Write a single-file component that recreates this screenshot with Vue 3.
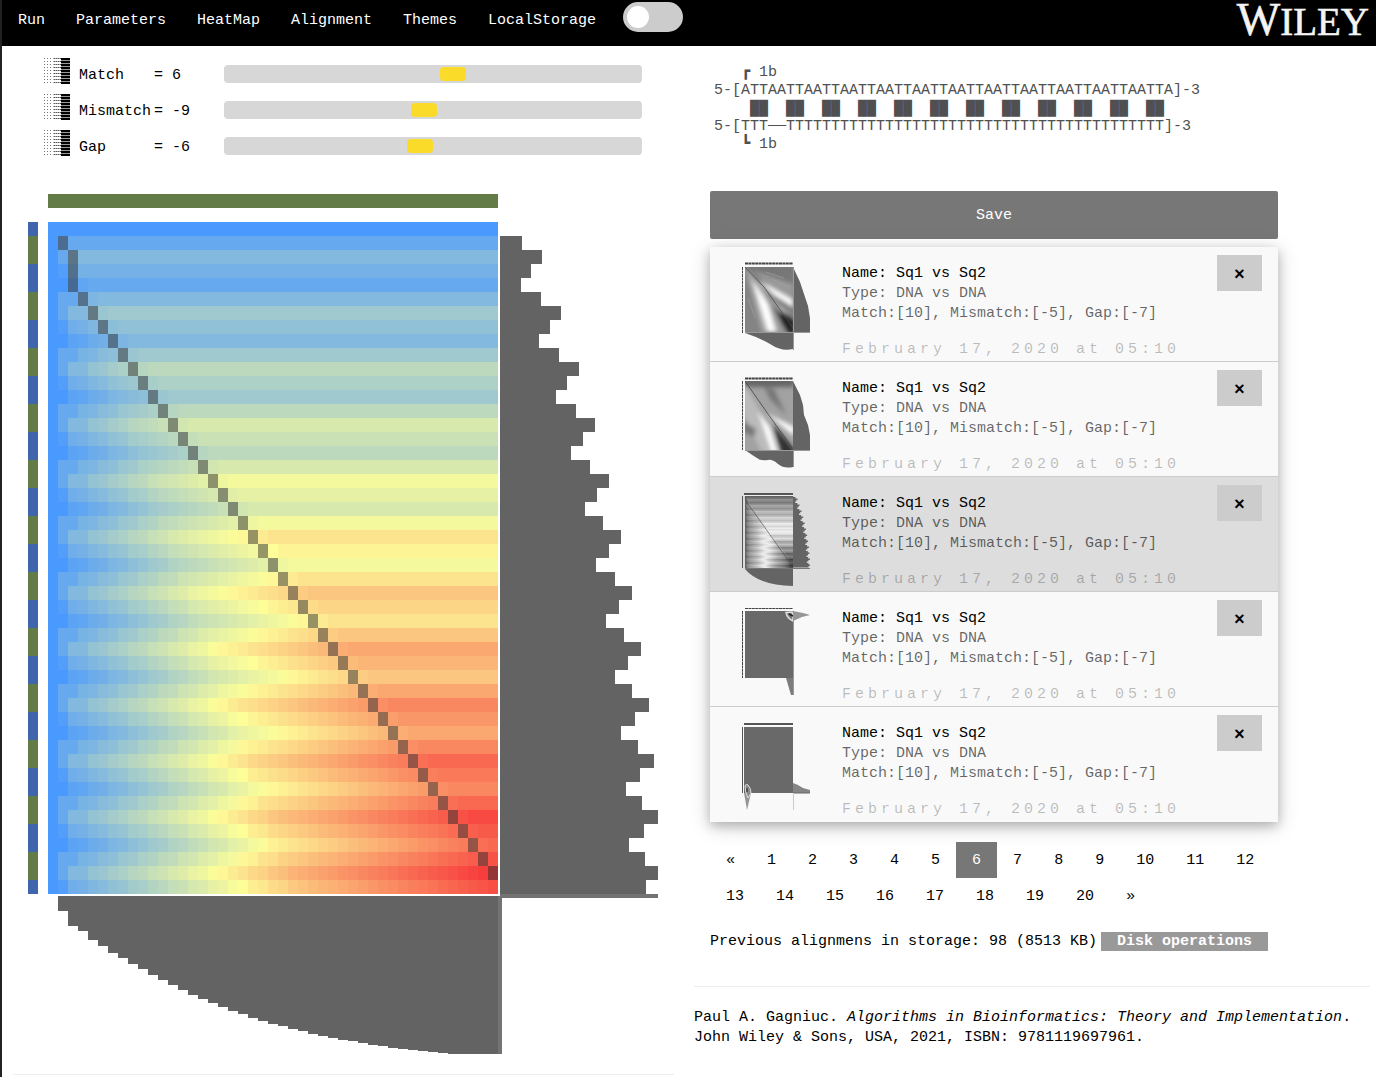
<script setup>
import { ref } from 'vue'

const menu = ['Run', 'Parameters', 'HeatMap', 'Alignment', 'Themes', 'LocalStorage']
const dark = ref(false)

const params = ref([
  { id: 'match', label: 'Match', value: 6, limit: 60 },
  { id: 'mismatch', label: 'Mismatch', value: -9, limit: 200 },
  { id: 'gap', label: 'Gap', value: -6, limit: 90 }
])

// Sequences and their printed alignment
const seqA = 'ATTA'.repeat(12)
const seqB = 'T'.repeat(45)
const alignmentText = [
  '   ┏ 1b',
  '5-[' + seqA + ']-3',
  '   ' + ' ██ '.repeat(12),
  '5-[TTT──' + 'T'.repeat(42) + ']-3',
  '   ┗ 1b'
].join('\n')

// Local alignment scores
const score = { match: 10, mismatch: -5, gap: -7 }
const matrix = []
for (let i = 0; i < seqA.length; i++) {
  matrix.push([])
  for (let j = 0; j < seqB.length; j++) {
    if (i === 0 || j === 0) {
      matrix[i].push(0)
      continue
    }
    const s = seqA[i] === seqB[j] ? score.match : score.mismatch
    matrix[i].push(Math.max(0, matrix[i - 1][j - 1] + s, matrix[i - 1][j] + score.gap, matrix[i][j - 1] + score.gap))
  }
}
const top = Math.max(...matrix.flat())

function mix(a, b, t) {
  return 'rgb(' + a.map((c, k) => Math.round(c + (b[k] - c) * t)).join(',') + ')'
}
function heat(v) {
  const t = (v / top) * 2
  return t <= 1 ? mix([74, 153, 255], [253, 254, 152], t) : mix([253, 250, 152], [247, 56, 58], t - 1)
}
function gray(v) {
  const t = (v / top) * 2
  return t <= 1 ? mix([98, 98, 98], [244, 244, 244], t) : mix([244, 244, 244], [50, 50, 50], t - 1)
}

// Neighbouring cells with the same score are merged into one run
const runs = []
matrix.forEach((row, i) => {
  let start = 0
  for (let j = 1; j <= row.length; j++) {
    if (row[j] !== row[start]) {
      runs.push({ i, j: start, n: j - start, v: row[start] })
      start = j
    }
  }
})

const trace = [[1, 1], [2, 2], [3, 2], [4, 2]]
for (let i = 5; i <= 46; i++) trace.push([i, i - 2])

const rowBars = [22, 42, 31, 21, 41, 61, 50, 39, 59, 79, 67, 56, 76, 95, 83, 71, 90, 109, 97, 85, 103, 121, 109, 96, 115, 132, 119, 106, 124, 141, 128, 115, 132, 149, 135, 121, 138, 154, 140, 126, 142, 158, 144, 129, 145, 158, 146]
const colBars = [15, 30, 35, 44, 50, 57, 62, 68, 73, 79, 84, 89, 94, 99, 103, 107, 111, 115, 118, 122, 125, 128, 130, 133, 135, 138, 140, 142, 144, 145, 147, 149, 150, 152, 153, 154, 155, 156, 157, 158, 158, 158, 158, 158]

const toothed = 'M51 5' + rowBars.map((w, i) => `H${(51 + w * 0.107).toFixed(1)}v1.5`).join('') + 'H51z'

const saved = [1, 2, 3, 4, 5]
const current = ref(3)
const pages = ['«', ...Array.from({ length: 20 }, (_, i) => String(i + 1)), '»']
const page = ref('6')
</script>

<template>
  <div class="page">
    <header class="bar">
      <nav class="menu">
        <a v-for="m in menu" :key="m" href="#">{{ m }}</a>
      </nav>
      <label class="switch">
        <input v-model="dark" type="checkbox" aria-label="Dark theme">
        <span class="knob"></span>
      </label>
      <svg class="logo" width="142" height="46" viewBox="0 0 142 46" role="img" aria-label="Wiley">
        <text x="141" y="35" text-anchor="end"><tspan class="initial">W</tspan>ILEY</text>
      </svg>
    </header>

    <main class="columns">
      <section class="left">
        <div v-for="p in params" :key="p.id" class="param">
          <svg class="shade" width="26" height="26" viewBox="0 0 26 26" aria-hidden="true" shape-rendering="crispEdges">
            <defs>
              <pattern id="sparse" width="3" height="3" patternUnits="userSpaceOnUse">
                <rect width="1" height="1" fill="#777" />
              </pattern>
              <pattern id="medium" width="2" height="3" patternUnits="userSpaceOnUse">
                <rect width="1" height="1" fill="#555" /><rect x="1" width="1" height="1" fill="#aaa" />
              </pattern>
              <pattern id="dense" width="2" height="3" patternUnits="userSpaceOnUse">
                <rect width="2" height="3" fill="#000" /><rect y="2" width="2" height="1" fill="#999" />
              </pattern>
            </defs>
            <rect width="9" height="26" fill="url(#sparse)" />
            <rect x="9" width="8" height="26" fill="url(#medium)" />
            <rect x="17" width="9" height="26" fill="url(#dense)" />
          </svg>
          <label :for="p.id">{{ p.label }}</label>
          <output :for="p.id">= {{ p.value }}</output>
          <input :id="p.id" v-model.number="p.value" type="range" :min="-p.limit" :max="p.limit">
        </div>

        <svg class="heatmap" width="630" height="860" viewBox="0 0 630 860" shape-rendering="crispEdges" role="img" aria-label="Alignment heat map">
          <rect x="20" y="0" width="450" height="14" fill="#637c47" />
          <rect v-for="(c, i) in seqA" :key="'s' + i" x="0" :y="28 + i * 14" width="10" height="14" :fill="c === 'A' ? '#4065ad' : '#637c47'" />
          <rect v-for="r in runs" :key="r.i + '-' + r.j" :x="20 + r.j * 10" :y="28 + r.i * 14" :width="r.n * 10" height="14" :fill="heat(r.v)" />
          <rect v-for="t in trace" :key="'t' + t[0]" :x="20 + t[1] * 10" :y="28 + t[0] * 14" width="10" height="14" fill="#323232" fill-opacity=".5" />
          <rect v-for="(w, i) in rowBars" :key="'r' + i" x="472" :y="42 + i * 14" :width="w" height="14" fill="#636363" />
          <rect v-for="(h, i) in colBars" :key="'c' + i" :x="30 + i * 10" y="702" width="10" :height="h" fill="#636363" />
          <rect x="472" y="700" width="158" height="4" fill="#737373" />
          <rect x="470" y="702" width="4" height="158" fill="#737373" />
        </svg>
        <hr>
      </section>

      <section class="right">
        <div class="panel">
          <pre class="alignment">{{ alignmentText }}</pre>
          <button class="save" type="button">Save</button>

          <ul class="saved">
            <li v-for="n in saved" :key="n" :class="{ active: n === current }" @click="current = n">
              <svg class="thumb" width="72" height="96" viewBox="0 0 72 96" aria-hidden="true">
                <template v-if="n === 1">
                  <defs>
                    <clipPath id="box1"><rect x="3" y="5" width="48" height="65" /></clipPath>
                    <filter id="soft" x="-30%" y="-30%" width="160%" height="160%"><feGaussianBlur stdDeviation="2" /></filter>
                  </defs>
                  <path d="M3 1.500H51" stroke="#444" stroke-width="2" stroke-dasharray="3 .4" />
                  <path d="M.5 5V71" stroke="#444" stroke-dasharray="3 .5" />
                  <g clip-path="url(#box1)">
                    <rect x="3" y="5" width="48" height="65" fill="#848484" />
                    <g filter="url(#soft)">
                      <path d="M3 5L51 70V0H3z" fill="#777" />
                      <path d="M10 8L51 22V46z" fill="#999" />
                      <path d="M16 18L51 38V45L32 33z" fill="#fff" />
                      <path d="M3 5L24 30L38 70H20z" fill="#aaa" />
                      <path d="M10 18L26 42L34 70H26z" fill="#fff" />
                      <path d="M32 44L52 58V72H44z" fill="#222" />
                      <path d="M24 32L51 53L38 50z" fill="#aaa" />
                      <path d="M28 38L36 56L46 72H38z" fill="#999" />
                    </g>
                    <path d="M3 5L22 25L51 66" fill="none" stroke="#4c4c4c" stroke-width=".8" />
                    <path d="M8 20l7 20M6 36l7 20M24 10l18 6M30 17l18 8" stroke="#aaa" stroke-width="1" opacity=".5" />
                  </g>
                  <path d="M51 5L58 20L66 44L68 56V71H51z" fill="#646464" />
                  <path d="M3 71H51V87Q40 90 28 82Q18 76 3 71z" fill="#646464" />
                  <path d="M3 70.500H68M51.500 5V88" stroke="#999" />
                </template>

                <template v-else-if="n === 2">
                  <defs>
                    <clipPath id="box2"><rect x="3" y="4" width="48" height="69" /></clipPath>
                    <filter id="soft2" x="-30%" y="-30%" width="160%" height="160%"><feGaussianBlur stdDeviation="2" /></filter>
                  </defs>
                  <path d="M3 1.500H51" stroke="#444" stroke-width="2" stroke-dasharray="3 .4" />
                  <path d="M.5 4V73" stroke="#444" stroke-dasharray="3 .5" />
                  <g clip-path="url(#box2)">
                    <rect x="3" y="4" width="48" height="69" fill="#a2a2a2" />
                    <g filter="url(#soft2)">
                      <path d="M0 0H52V10H0z" fill="#666" />
                      <path d="M0 4L16 30L34 76H20L0 34z" fill="#bbb" />
                      <path d="M0 44L14 52L12 60L0 54z" fill="#777" />
                      <path d="M16 34L28 50L36 76H30z" fill="#fff" />
                      <path d="M24 36L52 50V59z" fill="#fff" />
                      <path d="M22 10L32 12L44 38L28 22z" fill="#777" />
                      <path d="M30 46L52 72V78H40z" fill="#333" />
                    </g>
                    <path d="M3 4L26 37L51 72" fill="none" stroke="#444" stroke-width=".8" />
                  </g>
                  <path d="M51 4L58 18L61 28L62 38L66 48L68 58V73H51z" fill="#646464" />
                  <path d="M3 73H51V90Q42 92 36 87Q30 82 26 83Q18 84 15 81Q10 78 3 73z" fill="#646464" />
                  <path d="M3 73.500H68M51.500 73V90" stroke="#999" />
                </template>

                <template v-else-if="n === 3">
                  <path d="M2 2H51" stroke="#555" stroke-width="2" />
                  <path d="M.5 4V76" stroke="#555" />
                  <rect x="2" y="3" width="49" height="1" fill="#eee" />
                  <rect v-for="r in runs" :key="r.i + '-' + r.j" :x="3 + r.j * 48 / 45" :y="4 + r.i * 1.5" :width="r.n * 48 / 45 + 0.2" height="2" :fill="gray(r.v)" />
                  <path d="M3 5L6 12L51 75" fill="none" stroke="#444" stroke-width=".6" />
                  <path :d="toothed" fill="#646464" />
                  <path d="M3 77H51V94Q16 93 3 77z" fill="#646464" />
                  <path d="M3 76.500H68" stroke="#777" />
                </template>

                <template v-else-if="n === 4">
                  <path d="M3 1.500H51" stroke="#444" stroke-dasharray="3 .4" />
                  <path d="M.5 4V71" stroke="#444" stroke-dasharray="3 .4" />
                  <rect x="3" y="4" width="48" height="67" fill="#696969" />
                  <path d="M51 4L61 6L68 8L60 10L51 14z" fill="#969696" />
                  <path d="M44 5.500Q45 11 51 14V8L50 5z" fill="#777" stroke="#ddd" stroke-width="1.500" />
                  <path d="M47 7l4 2" stroke="#222" stroke-width="1.500" />
                  <path d="M44 71H51V88H49z" fill="#7c7c7c" />
                  <path d="M51.500 4V88" stroke="#999" />
                </template>

                <template v-else>
                  <path d="M2 2H51" stroke="#555" stroke-width="2" />
                  <path d="M.5 5V71" stroke="#555" />
                  <rect x="2" y="5" width="49" height="66" fill="#696969" />
                  <path d="M51 61L56 63L61 66L68 68V71H51z" fill="#858585" />
                  <path d="M2 71H9L5 88z" fill="#969696" />
                  <path d="M3 64Q4 61 6 63Q9 66 9 71L6 76Q3 70 3 64z" fill="#888" stroke="#ddd" />
                  <path d="M5 66v4" stroke="#222" />
                  <path d="M51 71H68" stroke="#666" />
                  <path d="M51.500 71V88" stroke="#ccc" />
                </template>
              </svg>
              <div class="info">
                <span class="name">Name: Sq1 vs Sq2</span>
                <span class="detail">Type: DNA vs DNA</span>
                <span class="detail">Match:[10], Mismatch:[-5], Gap:[-7]</span>
                <time class="date" datetime="2020-02-17T05:10">February 17, 2020 at 05:10</time>
              </div>
              <button class="remove" type="button" aria-label="Remove">×</button>
            </li>
          </ul>

          <nav class="pager" aria-label="Pages">
            <a v-for="p in pages" :key="p" href="#" :class="{ active: p === page }">{{ p }}</a>
          </nav>

          <div class="storage">
            <span>Previous alignmens in storage: 98 (8513 KB)</span>
            <button type="button">Disk operations</button>
          </div>
        </div>
        <hr>
        <footer>
          Paul A. Gagniuc. <em>Algorithms in Bioinformatics: Theory and Implementation</em>.<br>
          John Wiley &amp; Sons, USA, 2021, ISBN: 9781119697961.
        </footer>
      </section>
    </main>
  </div>
</template>

<style>
body {
  margin: 0;
  background: #fff;
}
</style>

<style scoped>
.page {
  box-sizing: border-box;
  min-height: 100vh;
  border-left: 2px solid #222;
  color: #000;
  font: 15px/20px "Liberation Mono", monospace;
}
button {
  border: 0;
  padding: 0;
  font: inherit;
  cursor: pointer;
}
a {
  color: inherit;
  text-decoration: none;
}
hr {
  height: 1px;
  margin: 20px 0 0;
  border: 0;
  background: #eee;
}

.bar {
  display: flex;
  align-items: flex-start;
  height: 46px;
  padding: 0 6px 0 16px;
  background: #000;
  color: #fff;
}
.menu {
  display: flex;
  gap: 31px;
  padding-top: 11px;
}
.switch {
  display: flex;
  box-sizing: border-box;
  width: 60px;
  height: 30px;
  margin: 2px 0 0 27px;
  padding: 4px;
  border-radius: 15px;
  background: #ccc;
}
.switch input {
  position: absolute;
  opacity: 0;
}
.knob {
  width: 22px;
  height: 22px;
  border-radius: 50%;
  background: #fff;
}
.switch input:checked + .knob {
  margin-left: auto;
}
.logo {
  margin-left: auto;
  fill: #f4f4f4;
  stroke: #f4f4f4;
  stroke-width: .6px;
  font-family: "Liberation Serif", serif;
  font-size: 39px;
}
.logo .initial {
  font-size: 46px;
}

.columns {
  display: grid;
  grid-template-columns: 661fr 676fr;
  gap: 20px;
  padding: 10px 6px 0 11px;
}
.param {
  display: grid;
  grid-template-columns: 35px 75px 70px 1fr;
  align-items: center;
  height: 36px;
  padding: 0 32px 0 31px;
}
.param label,
.param output {
  padding-top: 4px;
}
.shade {
  margin-bottom: 6px;
}
.param input {
  appearance: none;
  box-sizing: border-box;
  width: 100%;
  height: 18px;
  margin: 0;
  border-radius: 4px;
  background: #d7d7d7;
}
.param input::-webkit-slider-thumb {
  appearance: none;
  width: 26px;
  height: 14px;
  border-radius: 4px;
  background: #fadb2a;
}
.heatmap {
  display: block;
  margin: 30px 0 0 15px;
}

.panel {
  max-width: 568px;
  margin-left: 16px;
}
.alignment {
  margin: 8px 0 37px 4px;
  color: #505050;
  font: 15px/18px "Liberation Mono", monospace;
}
.save {
  display: block;
  width: 100%;
  height: 48px;
  padding-top: 2px;
  border-radius: 2px;
  background: #777;
  color: #fff;
}
.saved {
  margin: 8px 0 0;
  padding: 0;
  list-style: none;
  background: #f9f9f9;
  box-shadow: 0 4px 10px rgba(0, 0, 0, .2), 0 4px 20px rgba(0, 0, 0, .19);
}
.saved li {
  display: flex;
  align-items: flex-start;
  box-sizing: border-box;
  height: 115px;
  padding: 0 16px 0 32px;
  border-bottom: 1px solid #ccc;
}
.saved li:last-child {
  border-bottom: 0;
}
.saved .active {
  background: #ddd;
}
.thumb {
  flex: none;
  margin-top: 15px;
}
.info {
  display: flex;
  flex: 1;
  flex-direction: column;
  padding: 17px 0 0 28px;
}
.detail {
  color: rgba(0, 0, 0, .6);
}
.date {
  margin-top: 16px;
  color: rgba(0, 0, 0, .26);
  letter-spacing: 4px;
}
.remove {
  width: 45px;
  height: 36px;
  margin-top: 8px;
  padding-top: 4px;
  background: #ccc;
  color: #000;
  font-size: 18px;
  font-weight: bold;
}
.pager {
  display: flex;
  flex-wrap: wrap;
  margin-top: 20px;
}
.pager a {
  padding: 9px 16px 7px;
}
.pager .active {
  background: #777;
  color: #fff;
}
.storage {
  display: flex;
  align-items: center;
  gap: 4px;
  margin-top: 16px;
}
.storage span {
  padding-top: 2px;
}
.storage button {
  padding: 0 16px;
  background: #999;
  color: #fff;
  font-weight: bold;
  line-height: 19px;
}
.right hr {
  margin-top: 34px;
}
footer {
  margin-top: 21px;
}
</style>
